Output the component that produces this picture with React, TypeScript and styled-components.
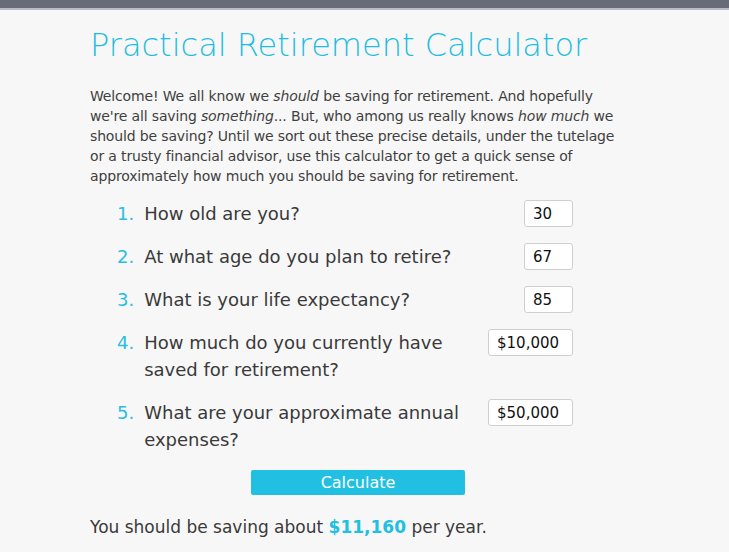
import React from 'react'
import styled, { createGlobalStyle } from 'styled-components'

const GlobalStyle = createGlobalStyle`
  html, body {
    margin: 0;
    padding: 0;
    background: #f7f7f7;
  }
  body {
    font-family: "DejaVu Sans", "Noto Sans", sans-serif;
    color: #3a3a3a;
  }
`

const TopBar = styled.div`
  height: 8px;
  background-color: #676c79;
  border-bottom: 2px solid #b9bac3;
`

const Main = styled.main`
  margin-left: 90px;
  width: 536px;
  padding-top: 15px;
`

const Title = styled.h1`
  margin: 0;
  font-size: 32px;
  line-height: 40px;
  font-weight: 300;
  color: #1fbde1;
`

const Intro = styled.p`
  margin: 21px 0 0;
  font-size: 14px;
  line-height: 20px;
  letter-spacing: -0.15px;
  color: #3f3f3f;
`

const Questions = styled.div`
  margin-top: 14px;
  padding-left: 27px;
  width: 456px;
  display: flex;
  flex-direction: column;
  gap: 16px;
`

const Row = styled.div`
  display: flex;
  align-items: flex-start;
  font-size: 18px;
  line-height: 27px;
`

const Num = styled.span`
  color: #2bbde0;
  margin-right: 10px;
  white-space: nowrap;
`

const Label = styled.span`
  flex: 1;
  padding-right: 20px;
  color: #3a3a3a;
`

const Field = styled.input<{ $w: number }>`
  box-sizing: border-box;
  width: ${p => p.$w}px;
  height: 27px;
  border: 1px solid #cfcfcf;
  border-radius: 3px;
  background: #fff;
  padding: 0 8px;
  font-family: inherit;
  font-size: 15px;
  color: #111;
  outline: none;
`

const ButtonWrap = styled.div`
  display: flex;
  justify-content: center;
  margin-top: 17px;
`

const CalcButton = styled.button`
  width: 214px;
  height: 25px;
  border: none;
  border-radius: 2px;
  background-color: #21bfe2;
  color: #fff;
  font-family: inherit;
  font-size: 16px;
  padding: 0;
  cursor: pointer;
`

const Result = styled.p`
  margin: 20px 0 0;
  font-size: 17px;
  line-height: 24px;
  color: #3a3a3a;
`

const Amount = styled.strong`
  color: #21bfe2;
  font-weight: 600;
`

const questions = [
  { label: 'How old are you?', value: '30', w: 49 },
  { label: 'At what age do you plan to retire?', value: '67', w: 49 },
  { label: 'What is your life expectancy?', value: '85', w: 49 },
  { label: 'How much do you currently have saved for retirement?', value: '$10,000', w: 85 },
  { label: 'What are your approximate annual expenses?', value: '$50,000', w: 85 },
]

export default function App () {
  return (
    <>
      <GlobalStyle />
      <TopBar />
      <Main>
        <Title>Practical Retirement Calculator</Title>
        <Intro>
          Welcome! We all know we <em>should</em> be saving for retirement. And hopefully
          we're all saving <em>something</em>... But, who among us really knows <em>how much</em> we
          should be saving? Until we sort out these precise details, under the tutelage
          or a trusty financial advisor, use this calculator to get a quick sense of
          approximately how much you should be saving for retirement.
        </Intro>
        <Questions>
          {questions.map((q, i) => (
            <Row key={i}>
              <Num>{i + 1}.</Num>
              <Label>{q.label}</Label>
              <Field $w={q.w} defaultValue={q.value} />
            </Row>
          ))}
        </Questions>
        <ButtonWrap>
          <CalcButton>Calculate</CalcButton>
        </ButtonWrap>
        <Result>
          You should be saving about <Amount>$11,160</Amount> per year.
        </Result>
      </Main>
    </>
  )
}
